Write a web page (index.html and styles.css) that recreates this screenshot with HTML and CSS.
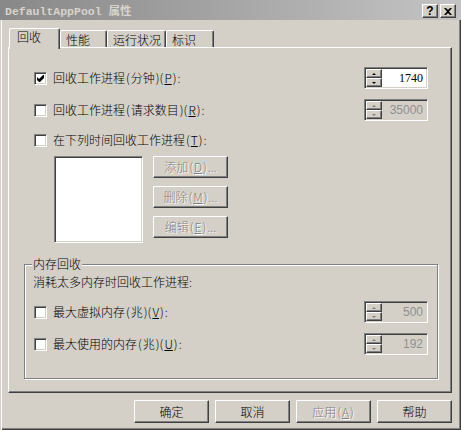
FILE: index.html
```html
<!DOCTYPE html>
<html lang="zh-CN">
<head>
<meta charset="utf-8">
<title>DefaultAppPool 属性</title>
<link rel="stylesheet" href="styles.css">
</head>
<body>
<div class="window">
  <div class="titlebar">
    <span class="title">DefaultAppPool 属性</span>
    <div class="caption-btns">
      <span class="cap-btn help">?</span>
      <span class="cap-btn close"><svg width="8" height="7" viewBox="0 0 8 7"><path d="M0 0H2L4 2L6 0H8L5 3.5L8 7H6L4 5L2 7H0L3 3.5Z" fill="#000"/></svg></span>
    </div>
  </div>
  <div class="client">
    <div class="tabs">
      <div class="tab active">回收</div>
      <div class="tab t2">性能</div>
      <div class="tab t3">运行状况</div>
      <div class="tab t4">标识</div>
    </div>
    <div class="panel">
      <div class="row">
        <label class="check"><span class="box"><svg width="7" height="7" viewBox="0 0 7 7"><path d="M0 2L2 4L6 0H7V3L3 7H2L0 5Z" fill="#000"/></svg></span><span>回收工作进程<span class="p">(</span>分钟<span class="p">)(</span><u>P</u><span class="p">)</span>:</span></label>
        <div class="spin">
          <div class="sbs"><span class="sb up"></span><span class="sb down"></span></div>
          <div class="field">1740</div>
        </div>
      </div>
      <div class="row row2">
        <label class="check"><span class="box"></span><span>回收工作进程<span class="p">(</span>请求数目<span class="p">)(</span><u>R</u><span class="p">)</span>:</span></label>
        <div class="spin disabled">
          <div class="sbs"><span class="sb up"></span><span class="sb down"></span></div>
          <div class="field">35000</div>
        </div>
      </div>
      <div class="row row3">
        <label class="check"><span class="box"></span><span>在下列时间回收工作进程<span class="p">(</span><u>T</u><span class="p">)</span>:</span></label>
      </div>
      <div class="sched">
        <div class="listbox"></div>
        <div class="side-btns">
          <span class="btn small disabled">添加<span class="p">(</span><u>D</u><span class="p">)</span>...</span>
          <span class="btn small disabled">删除<span class="p">(</span><u>M</u><span class="p">)</span>...</span>
          <span class="btn small disabled">编辑<span class="p">(</span><u>E</u><span class="p">)</span>...</span>
        </div>
      </div>
      <fieldset class="group">
        <legend>内存回收</legend>
        <div class="desc">消耗太多内存时回收工作进程:</div>
        <div class="row grow1">
          <label class="check"><span class="box"></span><span>最大虚拟内存<span class="p">(</span>兆<span class="p">)(</span><u>V</u><span class="p">)</span>:</span></label>
          <div class="spin disabled">
            <div class="sbs"><span class="sb up"></span><span class="sb down"></span></div>
            <div class="field">500</div>
          </div>
        </div>
        <div class="row grow2">
          <label class="check"><span class="box"></span><span>最大使用的内存<span class="p">(</span>兆<span class="p">)(</span><u>U</u><span class="p">)</span>:</span></label>
          <div class="spin disabled">
            <div class="sbs"><span class="sb up"></span><span class="sb down"></span></div>
            <div class="field">192</div>
          </div>
        </div>
      </fieldset>
    </div>
    <div class="footer">
      <span class="btn">确定</span>
      <span class="btn">取消</span>
      <span class="btn disabled">应用<span class="p">(</span><u>A</u><span class="p">)</span></span>
      <span class="btn">帮助</span>
    </div>
  </div>
</div>
</body>
</html>
```
FILE: styles.css
```css
* { box-sizing: border-box; }
html, body { margin: 0; padding: 0; background: #d4d0c8; }
body {
  width: 461px;
  height: 430px;
  overflow: hidden;
  font: 300 12px/14px "Noto Sans CJK SC", "Liberation Sans", sans-serif;
  color: #000;
}
.window {
  width: 461px;
  height: 430px;
  display: flex;
  flex-direction: column;
  background: #d4d0c8;
}
.titlebar {
  height: 20px;
  flex: none;
  display: flex;
  align-items: flex-start;
  justify-content: space-between;
  padding: 4px 5px 0 5px;
  background: linear-gradient(to right, #888888, #c4c4c4);
}
.title {
  font: bold 11.5px/14px "Liberation Mono", "Noto Sans CJK SC", monospace;
  color: #d8d4cc;
  margin-top: 1px;
  white-space: pre;
}
.caption-btns { display: flex; gap: 2px; }
.cap-btn {
  width: 16px;
  height: 14px;
  display: flex;
  align-items: center;
  justify-content: center;
  background: #d4d0c8;
  border: 1px solid;
  border-color: #fff #404040 #404040 #fff;
  box-shadow: inset -1px -1px #808080;
}
.cap-btn.help {
  font: bold 12px/12px "Liberation Sans", sans-serif;
  padding-bottom: 1px;
}
.client {
  flex: 1;
  display: flex;
  flex-direction: column;
  border-left: 1px solid #d4d0c8;
  box-shadow: inset 1px 0 #fff, inset -1px -1px #404040, inset -2px -2px #808080;
  padding: 8px 9px 0 7px;
}
.tabs {
  display: flex;
  align-items: flex-end;
  height: 19px;
  padding-left: 1px;
  position: relative;
  z-index: 1;
}
.tab {
  height: 17px;
  background: #d4d0c8;
  border-top: 1px solid #fff;
  border-left: 1px solid #fff;
  border-right: 1px solid #404040;
  box-shadow: inset -1px 0 #808080;
  border-radius: 2px 2px 0 0;
  padding: 2px 0 0 5px;
  white-space: nowrap;
}
.tab.active { width: 51px; height: 21px; margin-bottom: -2px; padding: 1px 0 0 7px; }
.tab.t2 { width: 47px; }
.tab.t3 { width: 59px; }
.tab.t4 { width: 48px; }
.panel {
  height: 346px;
  display: flex;
  flex-direction: column;
  border-top: 1px solid #fff;
  border-left: 1px solid #fff;
  border-right: 1px solid #404040;
  border-bottom: 1px solid #404040;
  box-shadow: inset -1px -1px #808080;
  padding: 19px 23px 0 25px;
}
.p { padding: 0 1px; }
.row {
  display: flex;
  align-items: center;
  justify-content: space-between;
  min-height: 22px;
}
.row2 { margin-top: 10px; }
.row3 { margin-top: 12px; min-height: 14px; }
.check { display: flex; align-items: center; gap: 6px; white-space: nowrap; }
.box {
  width: 13px;
  height: 13px;
  flex: none;
  background: #fff;
  border: 1px solid;
  border-color: #808080 #fff #fff #808080;
  box-shadow: inset 1px 1px #404040, inset -1px -1px #d4d0c8;
  padding: 2px;
  display: flex;
}
.box svg { display: block; }
.spin {
  width: 64px;
  height: 22px;
  display: flex;
  border: 1px solid;
  border-color: #808080 #fff #fff #808080;
  box-shadow: inset 1px 1px #404040, inset -1px -1px #d4d0c8;
  padding: 1px;
  background: #fff;
}
.sbs { display: flex; flex-direction: column; width: 16px; flex: none; }
.sb {
  height: 9px;
  display: flex;
  align-items: center;
  justify-content: center;
  background: #d4d0c8;
  border: 1px solid;
  border-color: #fff #404040 #404040 #fff;
  box-shadow: inset -1px -1px #808080;
}
.sb::before {
  content: "";
  width: 0;
  height: 0;
  border-left: 2px solid transparent;
  border-right: 2px solid transparent;
}
.sb.up::before { border-bottom: 2px solid #000; }
.sb.down::before { border-top: 2px solid #000; }
.field {
  flex: 1;
  text-align: right;
  padding-right: 3px;
  font: 12px/18px "Liberation Serif", serif;
}
.spin.disabled { background: #d4d0c8; }
.spin.disabled .field { color: #909090; font-family: "Liberation Sans", sans-serif; }
.spin.disabled .sb.up::before { border-bottom-color: #808080; }
.spin.disabled .sb.down::before { border-top-color: #808080; }
.sched {
  display: flex;
  gap: 10px;
  margin: 9px 0 0 20px;
}
.listbox {
  width: 89px;
  height: 87px;
  background: #fff;
  border: 1px solid;
  border-color: #808080 #fff #fff #808080;
  box-shadow: inset 1px 1px #404040, inset -1px -1px #d4d0c8;
}
.side-btns { display: flex; flex-direction: column; gap: 8px; }
.btn {
  width: 75px;
  height: 23px;
  display: flex;
  align-items: center;
  justify-content: center;
  background: #d4d0c8;
  border: 1px solid;
  border-color: #fff #404040 #404040 #fff;
  box-shadow: inset -1px -1px #808080;
  white-space: nowrap;
}
.btn.small { height: 22px; }
.btn.disabled { color: #808080; text-shadow: 1px 1px 0 #fff; }
.group {
  margin: 14px -10px 0 -10px;
  padding: 0 9px 23px 8px;
  border: 1px solid #808080;
  box-shadow: 1px 1px 0 #fff, inset 1px 1px 0 #fff;
  min-width: 0;
}
.group legend {
  padding: 0 1px;
  margin-left: -1px;
  background: #d4d0c8;
  line-height: 14px;
}
.desc { margin-top: 4px; }
.group .row { padding-left: 1px; }
.grow1 { margin-top: 12px; }
.grow2 { margin-top: 10px; }
.footer {
  display: flex;
  justify-content: flex-end;
  gap: 6px;
  margin-top: 7px;
}
u { text-decoration: underline; }
```
